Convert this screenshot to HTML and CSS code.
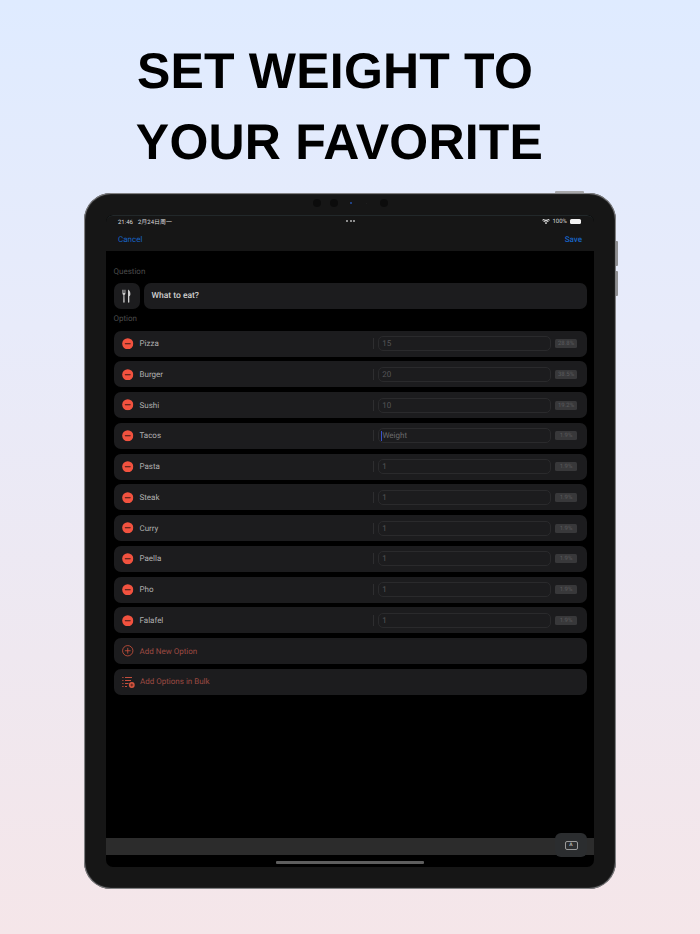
FILE: index.html
```html
<!DOCTYPE html>
<html lang="en">
<head>
<meta charset="utf-8">
<title>Set weight to your favorite</title>
<link rel="stylesheet" href="styles.css">
</head>
<body>
<svg class="defs" width="0" height="0" aria-hidden="true">
  <symbol id="minus" viewBox="0 0 12 12"><circle cx="6" cy="6" r="5.8" fill="#f2523f"/><rect x="2.8" y="5.4" width="6.4" height="1.2" rx=".5" fill="#3a1a16"/></symbol>
</svg>
<header class="title"><h1 class="l1">SET WEIGHT TO</h1><h1 class="l2">YOUR FAVORITE</h1></header>
<div class="device">
  <span class="btn-top"></span><span class="btn-side one"></span><span class="btn-side two"></span>
  <div class="cams"><i class="cam"></i><i class="cam"></i><i class="led"></i><i class="tiny"></i><i class="cam"></i></div>
  <div class="screen">
    <div class="nav">
      <div class="status">
        <span class="time"><span class="clock">21:46</span>2月24日周一</span>
        <span class="dots"><i></i><i></i><i></i></span>
        <span class="right">
          <svg class="wifi" viewBox="0 0 14 10"><path d="M7 9.6 4.7 7a3.4 3.4 0 0 1 4.6 0zM3.4 5.6 2 4a7.6 7.6 0 0 1 10 0l-1.4 1.6a5.5 5.5 0 0 0-7.2 0zM1.2 3.2 0 1.9a10.6 10.6 0 0 1 14 0l-1.2 1.3a8.8 8.8 0 0 0-11.6 0z" fill="#e8e8e8"/></svg>
          <span>100%</span>
          <span class="batt"></span>
        </span>
      </div>
      <div class="actions"><span class="cancel">Cancel</span><span class="save">Save</span></div>
    </div>
    <main class="content">
      <div class="label first">Question</div>
      <div class="question">
        <div class="q-icon">
          <svg viewBox="0 0 12 18" width="9" height="14"><path d="M.6.5v5.200c0 1 .6 1.600 1.300 1.900L1.700 17a.9.9 0 0 0 1.800 0l-.3-9.400c.7-.3 1.300-.9 1.300-1.900V.5h-.6v4.600h-.7V.5h-.7v4.600h-.7V.5h-.7v4.600H1.200V.5z" fill="#cfcfcf"/><path d="M8 .4c2 1 3.200 3.400 3.200 6 0 1.500-.7 2.500-1.500 3L9.800 17a.9.9 0 0 1-1.800 0z" fill="#cfcfcf"/></svg>
        </div>
        <div class="q-field">What to eat?</div>
      </div>
      <div class="label second">Option</div>
      <div class="rows">
        <div class="row"><svg class="minus"><use href="#minus"/></svg><span class="name">Pizza</span><i class="sep"></i><span class="input">15</span><span class="badge">28.8%</span></div>
        <div class="row"><svg class="minus"><use href="#minus"/></svg><span class="name">Burger</span><i class="sep"></i><span class="input">20</span><span class="badge">38.5%</span></div>
        <div class="row"><svg class="minus"><use href="#minus"/></svg><span class="name">Sushi</span><i class="sep"></i><span class="input">10</span><span class="badge">19.2%</span></div>
        <div class="row"><svg class="minus"><use href="#minus"/></svg><span class="name">Tacos</span><i class="sep"></i><span class="input active"><i class="caret"></i>Weight</span><span class="badge">1.9%</span></div>
        <div class="row"><svg class="minus"><use href="#minus"/></svg><span class="name">Pasta</span><i class="sep"></i><span class="input">1</span><span class="badge">1.9%</span></div>
        <div class="row"><svg class="minus"><use href="#minus"/></svg><span class="name">Steak</span><i class="sep"></i><span class="input">1</span><span class="badge">1.9%</span></div>
        <div class="row"><svg class="minus"><use href="#minus"/></svg><span class="name">Curry</span><i class="sep"></i><span class="input">1</span><span class="badge">1.9%</span></div>
        <div class="row"><svg class="minus"><use href="#minus"/></svg><span class="name">Paella</span><i class="sep"></i><span class="input">1</span><span class="badge">1.9%</span></div>
        <div class="row"><svg class="minus"><use href="#minus"/></svg><span class="name">Pho</span><i class="sep"></i><span class="input">1</span><span class="badge">1.9%</span></div>
        <div class="row"><svg class="minus"><use href="#minus"/></svg><span class="name">Falafel</span><i class="sep"></i><span class="input">1</span><span class="badge">1.9%</span></div>
        <div class="row">
          <svg class="minus" viewBox="0 0 12 12"><circle cx="6" cy="6" r="5.400" fill="none" stroke="#d8553f" stroke-width=".8"/><path d="M6 3v6M3 6h6" stroke="#d8553f" stroke-width=".8"/></svg>
          <span class="name add">Add New Option</span>
        </div>
        <div class="row">
          <svg class="bulk" viewBox="0 0 13 12"><path d="M3 1.500h7M3 4.500h6M3 7.500h3.500" stroke="#d8553f" stroke-width=".9"/><path d="M.3 1.500h1.200M.3 4.500h1.200M.3 7.500h1.200M.3 10.500h1.200M3 10.500h2" stroke="#d8553f" stroke-width=".9"/><circle cx="9.800" cy="9" r="2.900" fill="#d8553f"/><path d="M8.300 9h3M9.800 7.500v3" stroke="#3a1a16" stroke-width=".7"/></svg>
          <span class="name add">Add Options in Bulk</span>
        </div>
      </div>
    </main>
    <div class="kbbar">
      <div class="kbkey"><span class="kbicon">A</span></div>
    </div>
    <div class="homezone"><i class="home"></i></div>
  </div>
</div>
</body>
</html>
```
FILE: styles.css
```css
* { box-sizing: border-box; }
html, body { margin: 0; height: 934px; overflow: hidden; }
body {
  background: linear-gradient(180deg, #dfebff 0%, #e8ebfa 35%, #efe8f0 70%, #f5e6e9 100%);
  font-family: Roboto, "Noto Sans CJK SC", sans-serif;
  text-rendering: geometricPrecision;
}
.defs { position: absolute; }
.title { height: 193px; padding-top: 36px; text-align: center; }
.title h1 {
  margin: 0;
  font: 700 50px/71px "Liberation Sans", Arial, sans-serif;
  color: #000;
  letter-spacing: .2px;
  white-space: nowrap;
}
.title .l1 { padding-right: 30px; }
.title .l2 { padding-right: 21px; }
.device {
  position: relative;
  margin-left: 84px;
  width: 532px;
  height: 696px;
  padding: 22px;
  background: #161616;
  border-radius: 27px;
  box-shadow: inset 0 0 1px 1px #8d8d90;
}
.btn-top { position: absolute; left: 471px; top: -2px; width: 29px; height: 2px; background: #a9a9ac; border-radius: 1px 1px 0 0; }
.btn-side { position: absolute; right: -2px; width: 2px; height: 25px; background: #8f8f92; border-radius: 0 1px 1px 0; }
.btn-side.one { top: 48px; }
.btn-side.two { top: 78px; }
.cams { position: absolute; left: 229px; top: 6px; display: flex; align-items: center; height: 8px; }
.cams i { display: block; border-radius: 50%; }
.cam { width: 8px; height: 8px; background: #0c0c0c; margin-right: 8.500px; }
.cams .led { width: 2px; height: 2px; background: #2550a8; margin: 0 13.500px 0 4px; }
.cams .tiny { width: 1px; height: 1px; background: #222; margin-right: 13px; }
.screen {
  position: relative;
  width: 488px;
  height: 652px;
  background: #000;
  border-radius: 7px;
  overflow: hidden;
  display: flex;
  flex-direction: column;
}
.nav { height: 36px; background: #161616; border-top: 1px solid #22282a; border-radius: 7px 7px 0 0; flex: none; }
.status {
  height: 11px;
  padding: 0 13px 0 12px;
  display: flex;
  align-items: center;
  justify-content: space-between;
  font-size: 6px;
  color: #d8d8d8;
  position: relative;
}
.clock { margin-right: 5px; }
.dots { position: absolute; left: 240px; top: 4px; display: flex; gap: 1.500px; }
.dots i { width: 2px; height: 2px; border-radius: 50%; background: #b5b5b5; display: block; }
.right { display: flex; align-items: center; gap: 2px; }
.wifi { width: 8px; height: 5.500px; }
.batt { width: 11px; height: 5px; border-radius: 1.500px; background: #f2f2f2; display: block; margin-left: 1px; }
.actions {
  height: 24px;
  padding: 0 12px;
  display: flex;
  align-items: center;
  justify-content: space-between;
  font-size: 8px;
  color: #1763c4;
}
.save { font-weight: 500; }
.content { flex: 1; padding: 0 7.500px; }
.label { font-size: 8px; color: #4c4c4c; line-height: 10px; }
.label.first { margin-top: 15.500px; }
.label.second { margin-top: 4.500px; }
.question { display: flex; gap: 4.500px; height: 26px; margin-top: 6.500px; }
.q-icon { width: 26px; height: 26px; background: #1c1c1e; border-radius: 7px; display: flex; align-items: center; justify-content: center; }
.q-field {
  flex: 1;
  background: #1c1c1e;
  border-radius: 7px;
  display: flex;
  align-items: center;
  padding-left: 7.500px;
  font-size: 8.500px;
  font-weight: 500;
  color: #cfcfcf;
}
.rows { display: flex; flex-direction: column; gap: 4.780px; margin-top: 7px; }
.row {
  height: 26px;
  background: #1c1c1e;
  border-radius: 7px;
  display: flex;
  align-items: center;
  padding: 0 9.500px 0 8.500px;
}
.minus { width: 11.500px; height: 11.500px; flex: none; }
.bulk { width: 13px; height: 12px; flex: none; margin-right: -1px; }
.name { margin-left: 6px; width: 234px; font-size: 8px; color: #b0b0b0; white-space: nowrap; }
.name.add { color: #9c4a42; width: auto; }
.sep { display: block; width: 1px; height: 11px; background: #2e2e30; flex: none; }
.input {
  margin-left: 4px;
  width: 173px;
  height: 15px;
  border: 1px solid #2a2a2c;
  border-radius: 5px;
  display: flex;
  align-items: center;
  padding-left: 3px;
  font-size: 8px;
  color: #565658;
  position: relative;
}
.input.active { color: #6a6a6c; }
.caret { display: block; width: 1.200px; height: 10px; background: #3a50c8; margin-left: -1px; flex: none; }
.badge {
  margin-left: 4px;
  width: 22px;
  height: 9px;
  background: #38383a;
  border-radius: 1.500px;
  font-size: 6px;
  line-height: 9px;
  text-align: center;
  color: #5a5a5c;
  flex: none;
}
.kbbar { height: 17px; background: #2c2c2c; flex: none; position: relative; }
.kbkey {
  position: absolute;
  left: 449px;
  top: -5px;
  width: 32px;
  height: 24px;
  background: #2b2d2f;
  border-radius: 6px;
  display: flex;
  align-items: center;
  justify-content: center;
}
.kbicon {
  width: 13px;
  height: 9px;
  border: 1px solid #9a9a9a;
  border-radius: 2px;
  font-size: 5px;
  font-weight: 700;
  line-height: 7px;
  text-align: center;
  color: #b5b5b5;
}
.homezone { height: 12px; flex: none; display: flex; justify-content: center; padding-top: 6px; }
.home { display: block; width: 148px; height: 2.500px; border-radius: 1px; background: #5e5e5e; }
```
